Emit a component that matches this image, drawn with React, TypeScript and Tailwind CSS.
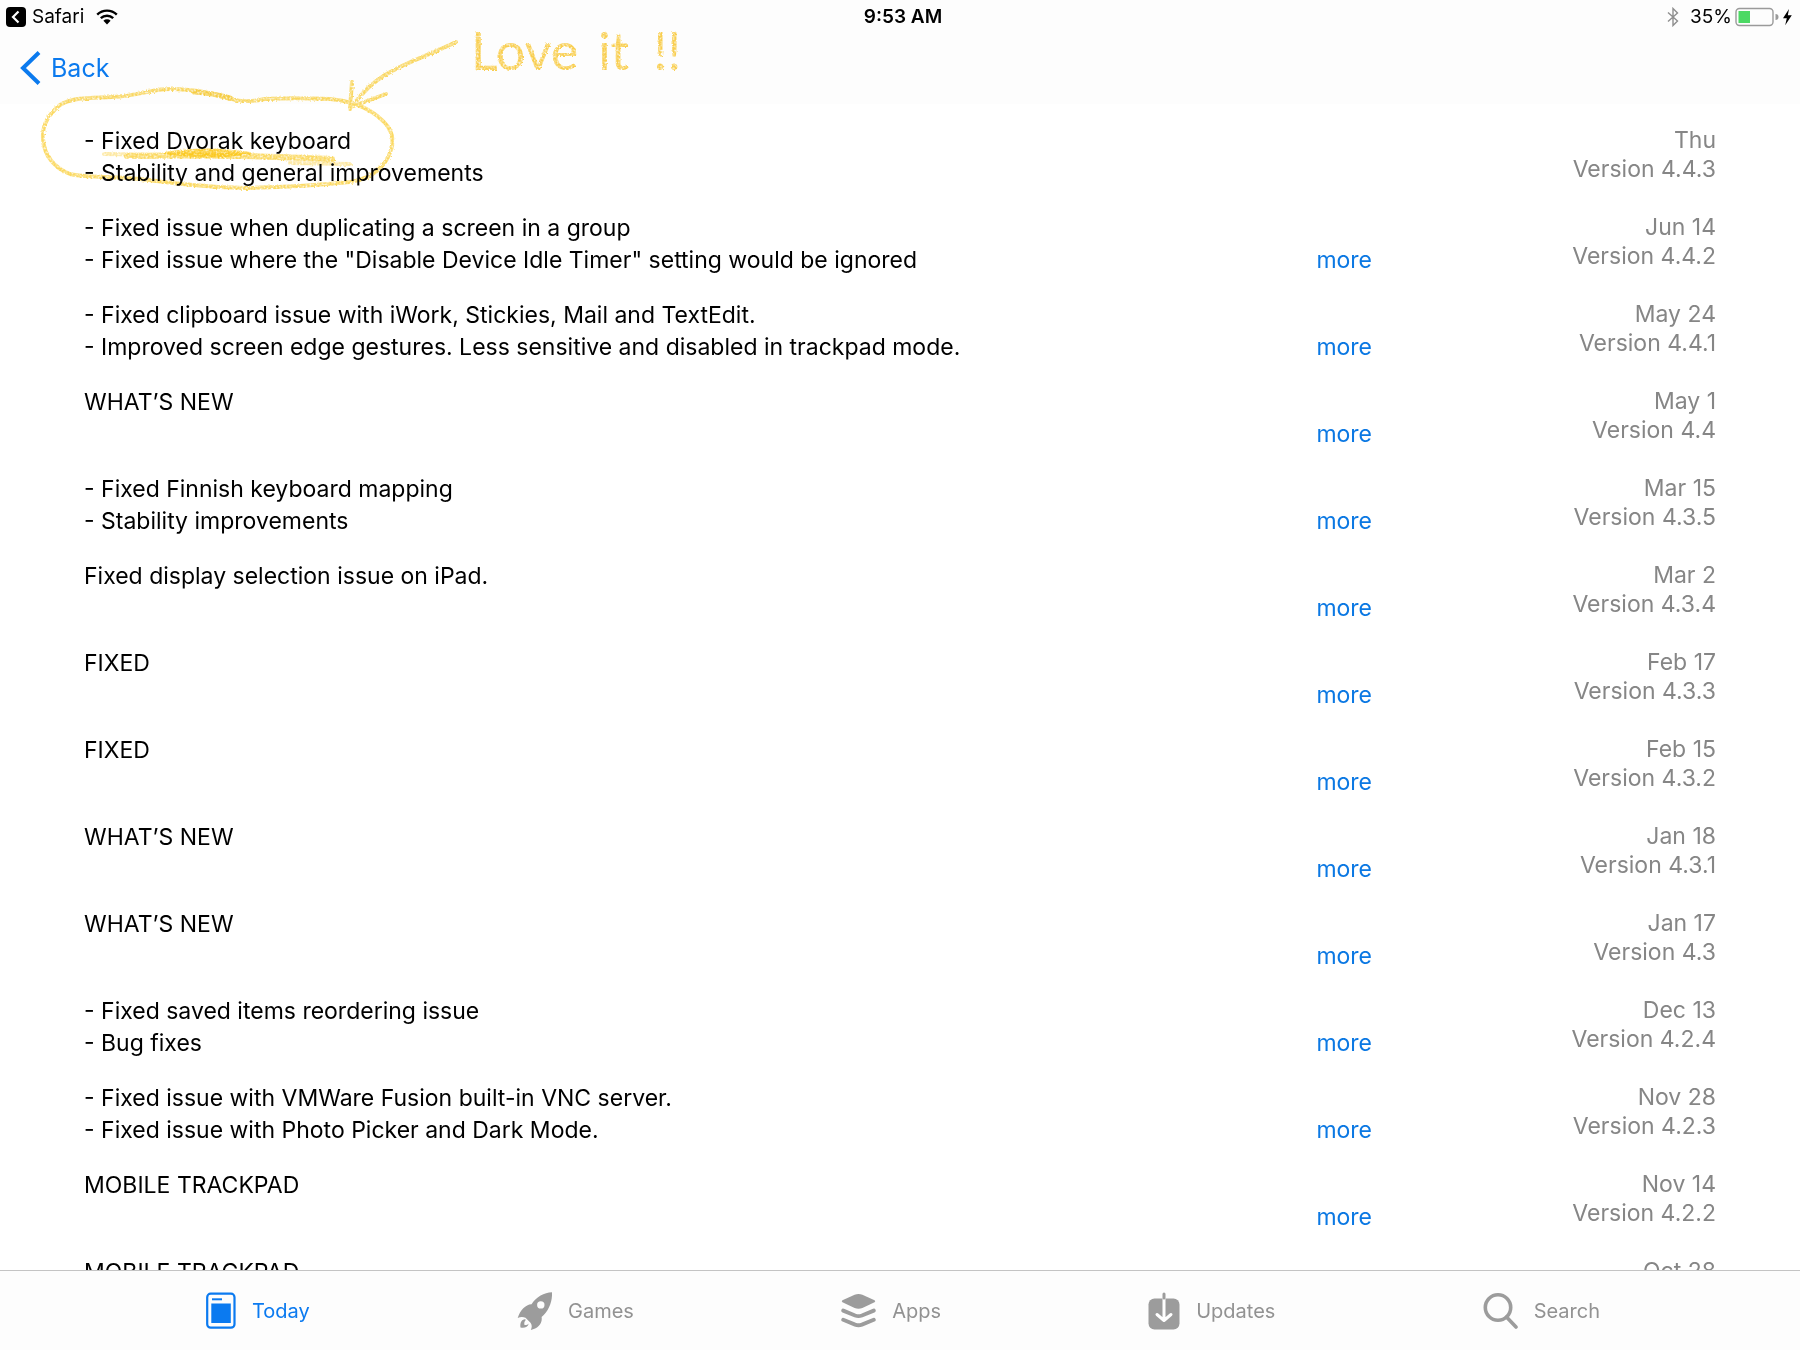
import React from "react";

type Release = { lines: string[]; date: string; version?: string; more?: boolean };

const releases: Release[] = [
  { lines: ["- Fixed Dvorak keyboard", "- Stability and general improvements"], date: "Thu", version: "4.4.3", more: false },
  { lines: ["- Fixed issue when duplicating a screen in a group", '- Fixed issue where the "Disable Device Idle Timer" setting would be ignored'], date: "Jun 14", version: "4.4.2" },
  { lines: ["- Fixed clipboard issue with iWork, Stickies, Mail and TextEdit.", "- Improved screen edge gestures. Less sensitive and disabled in trackpad mode."], date: "May 24", version: "4.4.1" },
  { lines: ["WHAT’S NEW"], date: "May 1", version: "4.4" },
  { lines: ["- Fixed Finnish keyboard mapping", "- Stability improvements"], date: "Mar 15", version: "4.3.5" },
  { lines: ["Fixed display selection issue on iPad."], date: "Mar 2", version: "4.3.4" },
  { lines: ["FIXED"], date: "Feb 17", version: "4.3.3" },
  { lines: ["FIXED"], date: "Feb 15", version: "4.3.2" },
  { lines: ["WHAT’S NEW"], date: "Jan 18", version: "4.3.1" },
  { lines: ["WHAT’S NEW"], date: "Jan 17", version: "4.3" },
  { lines: ["- Fixed saved items reordering issue", "- Bug fixes"], date: "Dec 13", version: "4.2.4" },
  { lines: ["- Fixed issue with VMWare Fusion built-in VNC server.", "- Fixed issue with Photo Picker and Dark Mode."], date: "Nov 28", version: "4.2.3" },
  { lines: ["MOBILE TRACKPAD"], date: "Nov 14", version: "4.2.2" },
  { lines: ["MOBILE TRACKPAD"], date: "Oct 28", more: false },
];

function StatusBar() {
  return (
    <div className="grid h-[34px] grid-cols-3 items-center pl-[6px] text-[19px] text-black">
      <div className="flex items-center">
        <button className="flex items-center gap-[6px]">
          <svg width="20" height="20" viewBox="0 0 20 20" aria-hidden="true">
            <rect width="20" height="20" rx="4" fill="#000" />
            <path d="M12.500 4.500 7 10l5.500 5.500" fill="none" stroke="#fff" strokeWidth="2.200" />
          </svg>
          Safari
        </button>
        <svg className="ml-3" width="22" height="16" viewBox="0 0 22 16" aria-label="Wi-Fi">
          <g fill="none" stroke="#000" strokeWidth="2.4">
            <path d="M1.2 5.6a14 14 0 0 1 19.6 0" />
            <path d="M4.8 9.2a9 9 0 0 1 12.4 0" />
          </g>
          <path d="M7.4 11.8a5.2 5.2 0 0 1 7.2 0L11 15.6z" />
        </svg>
      </div>
      <div className="text-center font-semibold">9:53 AM</div>
      <div className="flex items-center justify-end">
        <svg className="mr-[11px]" width="12" height="20" viewBox="0 0 12 20" aria-label="Bluetooth">
          <path d="M1 5.5 10.5 14 6 18.5v-17L10.5 6 1 14.5" fill="none" stroke="#8e8e8e" strokeWidth="1.4" />
        </svg>
        35%
        <svg className="ml-[3px]" width="65" height="20" viewBox="0 0 65 20" aria-label="Battery charging">
          <rect x="1" y="1.5" width="37" height="17" rx="3.5" fill="none" stroke="#9a9a9a" strokeWidth="1.4" />
          <rect x="3.5" y="4" width="11.5" height="12" fill="#4cd964" />
          <path d="M40.5 7a3 3 0 0 1 0 6z" fill="#9a9a9a" />
          <path d="M54 2 48 11.200h3.800l-1.600 7 6.600-10h-4z" />
        </svg>
      </div>
    </div>
  );
}

function ReleaseRow({ release }: { release: Release }) {
  return (
    <li className="flex h-[87px] shrink-0">
      <div className="relative flex-1 leading-8 text-black">
        {release.lines.map((line) => (
          <p key={line}>{line}</p>
        ))}
        {release.more !== false && (
          <button className="absolute right-0 top-8 text-[#0b78e3]">more</button>
        )}
      </div>
      <div className="w-[344px] pt-px text-right leading-[29px] text-[#868686]">
        <p>{release.date}</p>
        {release.version && <p>Version {release.version}</p>}
      </div>
    </li>
  );
}

function TodayIcon() {
  return (
    <svg width="30" height="38" viewBox="0 0 30 38" aria-hidden="true">
      <rect x="1.2" y="1.700" width="27.300" height="34" rx="3.500" fill="none" stroke="#0b7af0" strokeWidth="2.200" />
      <path d="M6 7.300h10" stroke="#0b7af0" strokeWidth="2" />
      <rect x="5.300" y="11.500" width="19.500" height="19.500" fill="#0b7af0" />
    </svg>
  );
}

function GamesIcon() {
  return (
    <svg width="35" height="38" viewBox="0 0 35 38" fill="#9c9c9c" aria-hidden="true">
      <path
        fillRule="evenodd"
        d="M35 .3C27 .9 19.500 4.500 14.500 12.200 8.500 12.500 3.200 18 .7 26c2.600-1.300 5.500-1.200 7.800-.300l5 5c1.500 2 1.700 4.500.300 7.200 7-1 12-6.500 10.800-13C31.500 19.500 35.500 10 35 .3zM23.800 9.200a3.700 3.700 0 1 1 0 7.400 3.700 3.700 0 0 1 0-7.400z"
      />
      <path d="M7.500 27.200C3.800 28 3 31.500 3.500 35.500c4 .700 7.500-.300 8.200-4-1.200 1.200-2.500 1.800-4.200 1.500-.500-1.700-.200-3.500 1.500-5.200z" />
    </svg>
  );
}

function AppsIcon() {
  return (
    <svg width="35" height="36" viewBox="0 0 36 36" fill="#9c9c9c" aria-hidden="true">
      <path d="M14 1.300q4-1.500 8 0L34.500 7q1.500 1 0 2L22 14.800q-4 1.700-8 0L1.500 9Q0 8 1.500 7z" />
      <path
        d="M2.300 17.600 14.500 22.600q3.500 1.300 7 0l12.200-5M2.300 27l12.200 5q3.500 1.300 7 0l12.200-5"
        fill="none"
        stroke="#9c9c9c"
        strokeWidth="4"
        strokeLinecap="round"
      />
    </svg>
  );
}

function UpdatesIcon() {
  return (
    <svg width="32" height="38" viewBox="0 0 32 38" fill="none" strokeLinecap="round" aria-hidden="true">
      <rect x=".5" y="6.500" width="31" height="31" rx="6" fill="#9c9c9c" />
      <path d="M16 7v20M9 22.500l7 6 7-6" stroke="#fff" strokeWidth="3" strokeLinejoin="round" />
      <path d="M16 2v4" stroke="#9c9c9c" strokeWidth="3" />
    </svg>
  );
}

function SearchIcon() {
  return (
    <svg width="35" height="38" viewBox="0 0 35 38" fill="none" stroke="#9c9c9c" aria-hidden="true">
      <circle cx="15" cy="15.500" r="12.700" strokeWidth="3.600" />
      <path d="M23.500 25 33 35" strokeWidth="3.600" strokeLinecap="round" />
    </svg>
  );
}

const tabs = [
  { label: "Today", Icon: TodayIcon },
  { label: "Games", Icon: GamesIcon },
  { label: "Apps", Icon: AppsIcon },
  { label: "Updates", Icon: UpdatesIcon },
  { label: "Search", Icon: SearchIcon },
];

function TabBar() {
  return (
    <nav className="flex h-20 shrink-0 items-center justify-between border-t border-[#c4c4c4] bg-[#fdfdfd] pl-[206px] pr-[200px] text-xl">
      {tabs.map(({ label, Icon }) => (
        <button
          key={label}
          className={label === "Today" ? "flex items-center gap-4 text-[#0b7af0]" : "flex items-center gap-4 text-[#929292]"}
        >
          <Icon />
          {label}
        </button>
      ))}
    </nav>
  );
}

function Annotation() {
  return (
    <div className="pointer-events-none absolute left-0 top-0 mix-blend-multiply">
      <svg width="700" height="200" viewBox="0 0 700 200" fill="none" strokeLinecap="round" strokeLinejoin="round" aria-hidden="true">
        <defs>
          <filter id="crayon" x="-5%" y="-10%" width="110%" height="120%">
            <feTurbulence type="fractalNoise" baseFrequency="0.5" numOctaves="2" seed="4" result="noise" />
            <feDisplacementMap in="SourceGraphic" in2="noise" scale="3" result="rough" />
            <feColorMatrix in="noise" type="matrix" values="0 0 0 0 0  0 0 0 0 0  0 0 0 0 0  0 0 0 -2 1.8" result="grain" />
            <feComposite in="rough" in2="grain" operator="in" />
          </filter>
        </defs>
        <g filter="url(#crayon)" stroke="#fbd964">
          <path
            strokeWidth="4"
            d="M230 99C215 95 200 89 170 89C150 89 140 96 112 97C90 98 72 97 60 105C48 115 42 125 43 139C44 155 54 168 70 174C85 178 110 176 140 179C180 184 205 187 245 188C290 187 320 185 350 182C372 179 386 166 391 150C396 134 388 124 376 115C364 106 350 101 330 99C305 98 285 98 265 99C250 102 238 102 230 98L210 93L194 92"
          />
          <path strokeWidth="5" d="M194 92Q212 93 230 98" stroke="#f8cf45" />
          <path strokeWidth="4" d="M456 42C430 55 408 61 385 75Q368 85 353 105" />
          <path strokeWidth="4" d="M352 82L350 109M386 94L351 107" />
          <path strokeWidth="4" d="M104 154L170 155M290 163L350 164" opacity=".6" />
          <path strokeWidth="6" d="M127 156Q230 154 332 159" />
        </g>
        <path d="M165 153Q205 146 250 153Q210 160 165 153Z" fill="#fcc81f" stroke="#fcc81f" strokeWidth="2" opacity=".9" filter="url(#crayon)" />
      </svg>
      <p className="absolute left-[471px] top-[18px] flex font-['Lato',sans-serif] text-[52px] leading-[64px] text-[#fbd050] [filter:url(#crayon)]">
        <span>Love</span>
        <span className="ml-5">it</span>
        <span className="ml-6">!!</span>
      </p>
    </div>
  );
}

export default function App() {
  return (
    <div className="relative flex h-screen flex-col overflow-hidden bg-white font-['Inter',sans-serif] text-[23px]">
      <header className="h-[104px] shrink-0 bg-[#fdfdfd]">
        <StatusBar />
        <button className="ml-5 mt-[14px] flex items-center gap-[10px] text-[25px] leading-10 text-[#0b7aee]">
          <svg width="21" height="34" viewBox="0 0 21 34" aria-hidden="true">
            <path d="M19 1.500 3 17l16 15.500" fill="none" stroke="#0b7aee" strokeWidth="4" />
          </svg>
          Back
        </button>
      </header>
      <main className="min-h-0 flex-1 overflow-hidden">
        <ul className="flex flex-col px-[84px] pt-[21px]">
          {releases.map((release) => (
            <ReleaseRow key={release.date} release={release} />
          ))}
        </ul>
      </main>
      <TabBar />
      <Annotation />
    </div>
  );
}
